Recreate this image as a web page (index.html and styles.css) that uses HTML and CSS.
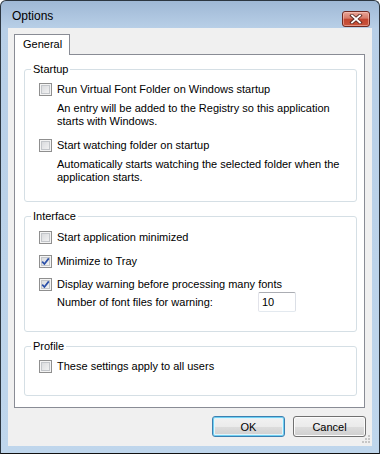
FILE: index.html
```html
<!DOCTYPE html>
<html lang="en">
  <head>
    <meta charset="UTF-8" />
    <title>Options</title>
    <link rel="stylesheet" href="styles.css">
  </head>
  <body>
    <div class="window">
      <div class="titlebar">
        <span class="title">Options</span>
        <button class="close" title="Close">
          <svg width="14" height="10" viewBox="0 0 14 10">
            <path d="M3 1.5 L11 8.5 M11 1.5 L3 8.5" stroke="#5a2a24" stroke-width="3.6" stroke-linecap="square" />
            <path d="M3 1.5 L11 8.5 M11 1.5 L3 8.5" stroke="#ffffff" stroke-width="1.8" stroke-linecap="square" />
          </svg>
        </button>
      </div>
      <div class="client">
        <div class="tabs">
          <div class="tab">General</div>
        </div>
        <div class="panel">
          <fieldset class="group">
            <legend>Startup</legend>
            <div class="group-body startup">
              <label class="row"><span class="check"></span>Run Virtual Font Folder on Windows startup</label>
              <p class="desc">An entry will be added to the Registry so this application<br />starts with Windows.</p>
              <label class="row gap11"><span class="check"></span>Start watching folder on startup</label>
              <p class="desc">Automatically starts watching the selected folder when the<br />application starts.</p>
            </div>
          </fieldset>
          <fieldset class="group">
            <legend>Interface</legend>
            <div class="group-body interface">
              <label class="row"><span class="check"></span>Start application minimized</label>
              <label class="row gap11"><span class="check checked"><svg width="11" height="11" viewBox="0 0 11 11"><path d="M2.2 5.6 L4.4 8 L8.8 2.4" fill="none" stroke="#2a4fa8" stroke-width="1.7" /></svg></span>Minimize to Tray</label>
              <label class="row gap10"><span class="check checked"><svg width="11" height="11" viewBox="0 0 11 11"><path d="M2.2 5.6 L4.4 8 L8.8 2.4" fill="none" stroke="#2a4fa8" stroke-width="1.7" /></svg></span>Display warning before processing many fonts</label>
              <div class="number-row">
                <span class="number-label">Number of font files for warning:</span>
                <input class="textbox" type="text" value="10" />
              </div>
            </div>
          </fieldset>
          <fieldset class="group">
            <legend>Profile</legend>
            <div class="group-body profile">
              <label class="row"><span class="check"></span>These settings apply to all users</label>
            </div>
          </fieldset>
        </div>
        <div class="buttons">
          <button class="btn default">OK</button>
          <button class="btn">Cancel</button>
        </div>
        <svg class="grip" width="9" height="9" viewBox="0 0 9 9">
          <rect x="6" y="0" width="2" height="2" fill="#c6c6c6" />
          <rect x="3" y="3" width="2" height="2" fill="#c6c6c6" />
          <rect x="6" y="3" width="2" height="2" fill="#c6c6c6" />
          <rect x="0" y="6" width="2" height="2" fill="#c6c6c6" />
          <rect x="3" y="6" width="2" height="2" fill="#c6c6c6" />
          <rect x="6" y="6" width="2" height="2" fill="#c6c6c6" />
        </svg>
      </div>
    </div>
  </body>
</html>
```

FILE: styles.css
```css
body {
  margin: 0;
  background: #ffffff;
  font-family: "Liberation Sans", Arial, sans-serif;
  font-size: 11px;
  color: #000;
}

.window {
  width: 380px;
  height: 454px;
  box-sizing: border-box;
  border: 1px solid #2c3640;
  border-bottom-color: #111;
  border-radius: 6px 6px 0 0;
  background: linear-gradient(#9fb8d5, #b8cfe7 27px, #bfd6ec);
  display: flex;
  flex-direction: column;
}

.titlebar {
  height: 27px;
  box-sizing: border-box;
  padding: 9px 9px 0 11px;
  display: flex;
  align-items: flex-start;
  justify-content: space-between;
}

.title {
  font-size: 12px;
  line-height: 15px;
  margin-top: -1px;
  color: #000;
}

.close {
  width: 28px;
  height: 16px;
  padding: 0;
  margin-top: 1px;
  border: 1px solid #6e2a22;
  border-radius: 3px;
  background: linear-gradient(#e8a597, #d67a68 45%, #c2452f 50%, #c9553d);
  box-shadow: inset 0 0 0 1px rgba(255, 210, 200, 0.5);
  display: flex;
  align-items: center;
  justify-content: center;
}

.client {
  margin: 0 7px;
  height: 418px;
  box-sizing: border-box;
  padding: 6px 6px 0 6px;
  background: #f0f0f0;
  position: relative;
}

.tabs {
  display: flex;
}

.tab {
  height: 21px;
  box-sizing: border-box;
  padding: 3px 7px 0 8px;
  line-height: 13px;
  border: 1px solid #898c95;
  border-bottom: none;
  background: #fff;
  margin-bottom: -1px;
  position: relative;
}

.panel {
  width: 351px;
  height: 354px;
  box-sizing: border-box;
  border: 1px solid #898c95;
  background: #fff;
  padding: 8px 7px 0 9px;
}

.group {
  margin: 0 0 8px 0;
  padding: 0;
  border: 1px solid #d5dfe5;
  border-radius: 3px;
  min-width: 0;
}

.group legend {
  margin-left: 6px;
  padding: 0 2px;
  line-height: 13px;
}

.group-body {
  padding-left: 14px;
  line-height: 13px;
}

.startup {
  padding-top: 7px;
  padding-bottom: 17px;
}

.interface {
  padding-top: 8px;
  padding-bottom: 19px;
}

.profile {
  padding-top: 7px;
  padding-bottom: 22px;
}

.row {
  display: flex;
  align-items: center;
  height: 13px;
  gap: 5px;
}

.gap11 {
  margin-top: 11px;
}

.gap10 {
  margin-top: 10px;
}

.desc {
  margin: 6px 0 0 18px;
  line-height: 13px;
}

.check {
  width: 13px;
  height: 13px;
  box-sizing: border-box;
  border: 1px solid #8f8f8f;
  background: linear-gradient(135deg, #d4d6d9, #f7f7f7);
  box-shadow: inset 0 0 0 1px #f4f4f4, inset 0 0 0 2px #c3c6ca;
  flex: none;
  display: flex;
  align-items: center;
  justify-content: center;
}

.number-row {
  margin-top: 1px;
  margin-left: 18px;
  height: 20px;
  display: flex;
  align-items: center;
}

.number-label {
  width: 201px;
}

.textbox {
  width: 38px;
  height: 20px;
  box-sizing: border-box;
  margin: 0;
  padding: 0 0 0 3px;
  border: 1px solid #abadb3;
  border-color: #abadb3 #dbdfe6 #e3e9ef #e2e3ea;
  border-radius: 2px;
  font-family: "Liberation Sans", Arial, sans-serif;
  font-size: 11px;
  color: #000;
  background: #fff;
}

.buttons {
  display: flex;
  justify-content: flex-end;
  gap: 8px;
  margin-top: 8px;
}

.btn {
  width: 73px;
  height: 21px;
  padding: 0;
  border: 1px solid #707070;
  border-radius: 3px;
  background: linear-gradient(#f2f2f2, #ebebeb 50%, #dddddd 50%, #cfcfcf);
  box-shadow: inset 0 0 0 1px #fcfcfc;
  font-family: "Liberation Sans", Arial, sans-serif;
  font-size: 11px;
  color: #000;
}

.btn.default {
  border-color: #3c7fb1;
  box-shadow: inset 0 0 0 1px #6fd0f2, inset 0 0 0 2px #e3f4fb;
}

.grip {
  position: absolute;
  right: 1px;
  bottom: 2px;
}
```
